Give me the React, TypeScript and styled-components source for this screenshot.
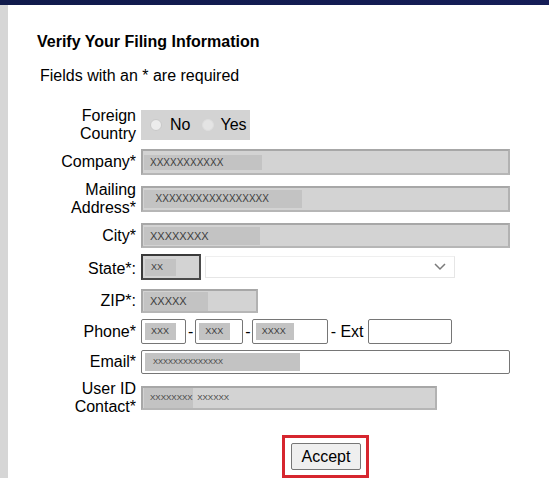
import React from 'react';
import styled, { createGlobalStyle, css } from 'styled-components';

const GlobalStyle = createGlobalStyle`
  html, body {
    margin: 0;
    padding: 0;
    background: #fff;
  }
  body {
    font-family: Arial, "Liberation Sans", sans-serif;
    color: #000;
  }
`;

const Page = styled.div`
  min-height: 100vh;
  display: flex;
  flex-direction: column;
`;

const TopBar = styled.div`
  height: 5px;
  background: linear-gradient(90deg, #101a4b, #151d57);
`;

const Body = styled.div`
  flex: 1;
  display: flex;
`;

const Strip = styled.div`
  width: 8px;
  background: #d6d6d6;
`;

const Main = styled.main`
  flex: 1;
  padding: 28px 0 0 29px;
`;

const Title = styled.h2`
  margin: 0;
  font-size: 16px;
  line-height: 18px;
  font-weight: 700;
`;

const Note = styled.p`
  margin: 16px 0 0 3px;
  font-size: 16px;
  line-height: 18px;
`;

const Form = styled.div`
  display: grid;
  grid-template-columns: 99px max-content;
  column-gap: 5px;
  row-gap: 6px;
  align-items: center;
  margin-top: 22px;
`;

const Label = styled.div`
  text-align: right;
  font-size: 16px;
  line-height: 18px;
`;

const Cell = styled.div<{ $top?: boolean; $h?: number }>`
  display: flex;
  align-items: ${(p) => (p.$top ? 'flex-start' : 'center')};
  ${(p) => p.$h && css`height: ${p.$h}px;`}
`;

const RadioGroup = styled.div`
  width: 109px;
  height: 30px;
  box-sizing: border-box;
  padding-left: 9px;
  display: flex;
  align-items: center;
  background: #d3d3d3;
  font-size: 16px;
`;

const RadioDot = styled.span<{ $soft?: boolean }>`
  width: 12px;
  height: 12px;
  border-radius: 50%;
  box-sizing: border-box;
  background: ${(p) => (p.$soft ? '#e4e4e4' : '#ececec')};
  border: 1px solid ${(p) => (p.$soft ? '#dedede' : '#c9c9c9')};
  margin-left: ${(p) => (p.$soft ? 12 : 0)}px;
`;

const RadioText = styled.span<{ $gap: number }>`
  margin-left: ${(p) => p.$gap}px;
`;

type Variant = 'gray' | 'white' | 'dark';

const Box = styled.div<{ $w: number; $h: number; $v?: Variant }>`
  box-sizing: border-box;
  width: ${(p) => p.$w}px;
  height: ${(p) => p.$h}px;
  display: flex;
  align-items: center;
  padding: 0 2px 0 1px;
  ${(p) =>
    p.$v === 'white'
      ? css`
          background: #fff;
          border: 1px solid #767676;
          border-radius: 2px;
          padding-left: 3px;
        `
      : p.$v === 'dark'
      ? css`
          background: #d3d3d3;
          border: 2px solid #3a3a3a;
          border-right-color: #4a4a4a;
          border-bottom-color: #4a4a4a;
          padding-left: 2px;
        `
      : css`
          background: #d3d3d3;
          border: 2px solid #a7a7a7;
          border-right-color: #b2b2b2;
          border-bottom-color: #b6b6b6;
        `}
`;

const Mask = styled.span<{ $w: number; $h?: number; $fs: number }>`
  flex: none;
  width: ${(p) => p.$w}px;
  height: ${(p) => p.$h ?? 16}px;
  background: #c3c3c3;
  color: #3d3d3d;
  font-size: ${(p) => p.$fs}px;
  line-height: ${(p) => p.$h ?? 16}px;
  padding-left: 6px;
  box-sizing: border-box;
  white-space: pre;
  overflow: visible;
`;

const Select = styled.div`
  box-sizing: border-box;
  width: 250px;
  height: 22px;
  margin: 2px 0 0 4px;
  border: 1px solid #e6e6e6;
  border-top-color: #efefef;
  background: #fff;
  display: flex;
  align-items: center;
  justify-content: flex-end;
  padding-right: 8px;
`;

const Dash = styled.span<{ $l: number; $r: number }>`
  font-size: 16px;
  margin: 0 ${(p) => p.$r}px 0 ${(p) => p.$l}px;
`;

const ButtonRow = styled.div`
  grid-column: 2;
  display: flex;
  justify-content: center;
  margin-top: 13px;
`;

const Highlight = styled.div`
  border: 3px solid #d6262f;
  padding: 5px 5px 5px 6px;
`;

const Button = styled.button`
  width: 70px;
  height: 27px;
  padding: 0;
  font-family: Arial, "Liberation Sans", sans-serif;
  font-size: 16px;
  color: #000;
  background: #efefef;
  border: 1px solid #767676;
  border-radius: 2px;
`;

const Chevron = () => (
  <svg width="12" height="8" viewBox="0 0 12 8">
    <polyline points="1,1 6,6 11,1" fill="none" stroke="#7a7a7a" strokeWidth="1.5" />
  </svg>
);

export default function App() {
  return (
    <>
      <GlobalStyle />
      <Page>
        <TopBar />
        <Body>
          <Strip />
          <Main>
            <Title>Verify Your Filing Information</Title>
            <Note>Fields with an * are required</Note>

            <Form>
              <Label>Foreign Country</Label>
              <Cell>
                <RadioGroup>
                  <RadioDot />
                  <RadioText $gap={8}>No</RadioText>
                  <RadioDot $soft />
                  <RadioText $gap={6}>Yes</RadioText>
                </RadioGroup>
              </Cell>

              <Label>Company*</Label>
              <Cell>
                <Box $w={369} $h={26}>
                  <Mask $w={118} $h={15} $fs={10}>XXXXXXXXXXX</Mask>
                </Box>
              </Cell>

              <Label>Mailing Address*</Label>
              <Cell>
                <Box $w={369} $h={26}>
                  <Mask $w={158} $h={18} $fs={10}>{'  XXXXXXXXXXXXXXXXX'}</Mask>
                </Box>
              </Cell>

              <Label>City*</Label>
              <Cell>
                <Box $w={369} $h={25}>
                  <Mask $w={116} $h={18} $fs={11}>XXXXXXXX</Mask>
                </Box>
              </Cell>

              <Label>State*:</Label>
              <Cell $top $h={29}>
                <Box $w={60} $h={26} $v="dark">
                  <Mask $w={31} $h={17} $fs={9}>XX</Mask>
                </Box>
                <Select>
                  <Chevron />
                </Select>
              </Cell>

              <Label>ZIP*:</Label>
              <Cell>
                <Box $w={117} $h={24}>
                  <Mask $w={64} $h={19} $fs={11}>XXXXX</Mask>
                </Box>
              </Cell>

              <Label>Phone*</Label>
              <Cell>
                <Box $w={45} $h={25} $v="white">
                  <Mask $w={31} $h={17} $fs={9}>XXX</Mask>
                </Box>
                <Dash $l={2} $r={2}>-</Dash>
                <Box $w={48} $h={25} $v="white">
                  <Mask $w={31} $h={17} $fs={9}>XXX</Mask>
                </Box>
                <Dash $l={2} $r={1}>-</Dash>
                <Box $w={76} $h={25} $v="white">
                  <Mask $w={38} $h={17} $fs={9}>XXXX</Mask>
                </Box>
                <Dash $l={3} $r={4}>- Ext</Dash>
                <Box $w={84} $h={25} $v="white" />
              </Cell>

              <Label>Email*</Label>
              <Cell>
                <Box $w={369} $h={24} $v="white">
                  <Mask $w={155} $h={18} $fs={7.5}>{' XXXXXXXXXXXXXX'}</Mask>
                </Box>
              </Cell>

              <Label>User ID Contact*</Label>
              <Cell>
                <Box $w={296} $h={24}>
                  <Mask $w={49} $h={20} $fs={8}>{'XXXXXXXX  XXXXXX'}</Mask>
                </Box>
              </Cell>

              <ButtonRow>
                <Highlight>
                  <Button>Accept</Button>
                </Highlight>
              </ButtonRow>
            </Form>
          </Main>
        </Body>
      </Page>
    </>
  );
}
